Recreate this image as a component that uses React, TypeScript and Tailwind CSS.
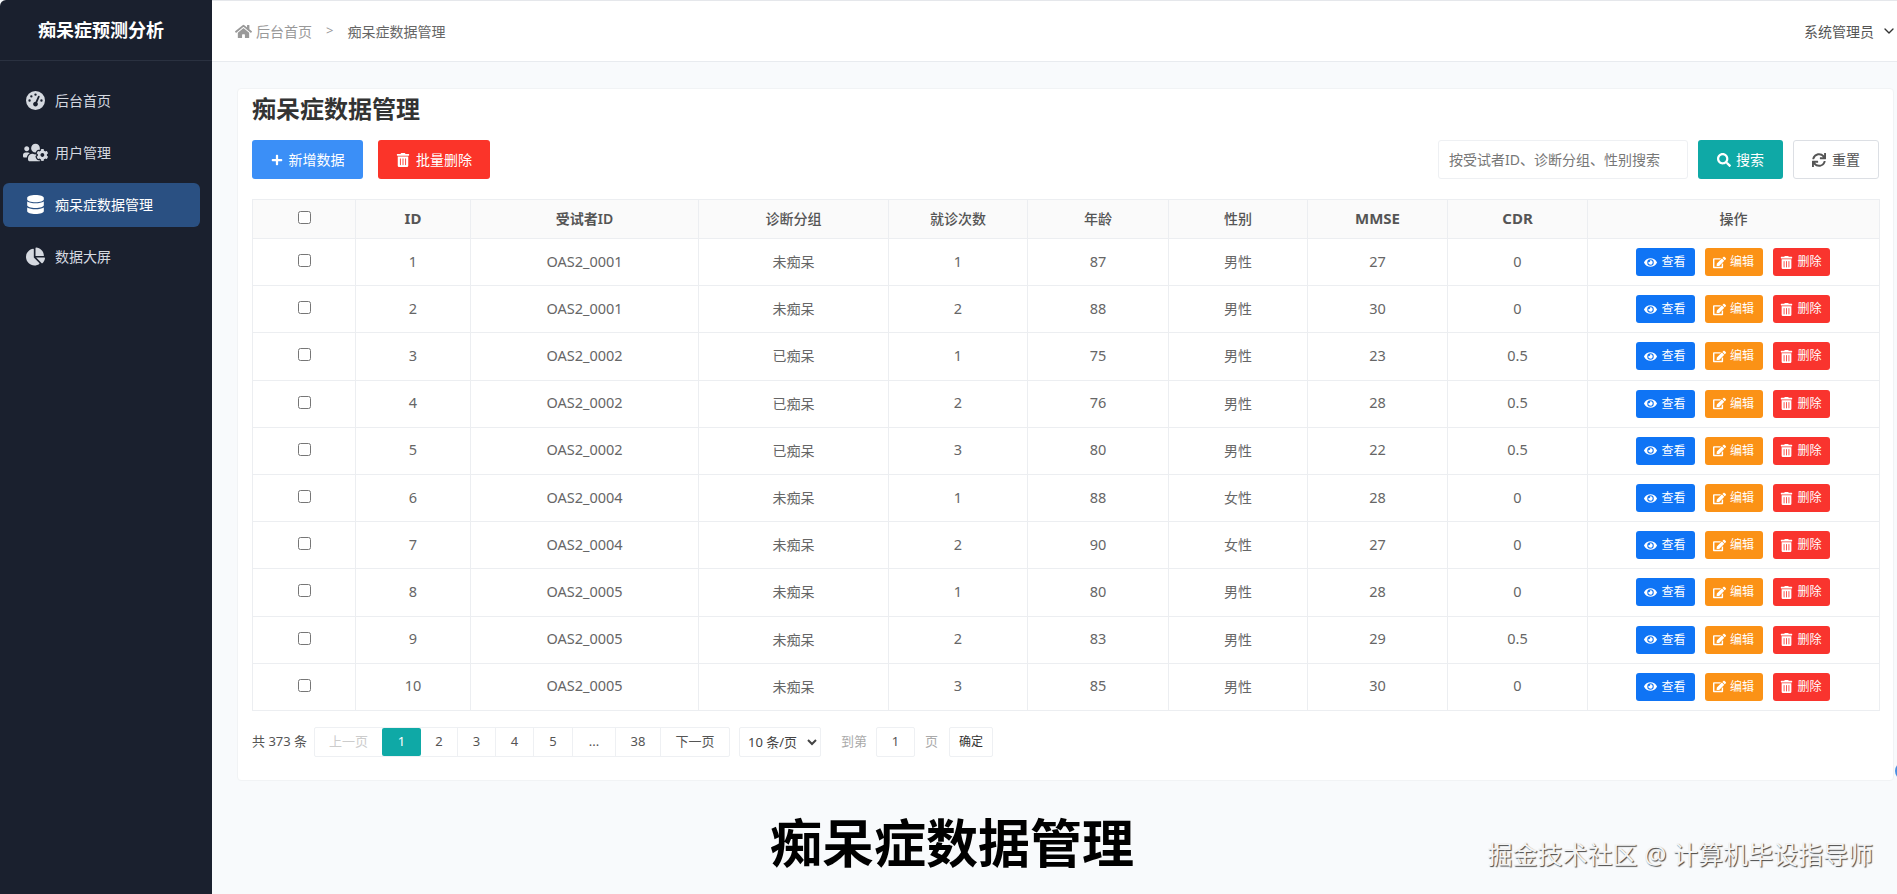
import {
  FaChartPie,
  FaDatabase,
  FaEdit,
  FaEye,
  FaHome,
  FaPlus,
  FaSearch,
  FaSync,
  FaTrashAlt,
  FaUsersCog,
} from "react-icons/fa";
import { FaGaugeHigh } from "react-icons/fa6";
import { FiChevronDown } from "react-icons/fi";

const rows = [
  { id: 1, sid: "OAS2_0001", group: "未痴呆", visit: 1, age: 87, sex: "男性", mmse: 27, cdr: "0" },
  { id: 2, sid: "OAS2_0001", group: "未痴呆", visit: 2, age: 88, sex: "男性", mmse: 30, cdr: "0" },
  { id: 3, sid: "OAS2_0002", group: "已痴呆", visit: 1, age: 75, sex: "男性", mmse: 23, cdr: "0.5" },
  { id: 4, sid: "OAS2_0002", group: "已痴呆", visit: 2, age: 76, sex: "男性", mmse: 28, cdr: "0.5" },
  { id: 5, sid: "OAS2_0002", group: "已痴呆", visit: 3, age: 80, sex: "男性", mmse: 22, cdr: "0.5" },
  { id: 6, sid: "OAS2_0004", group: "未痴呆", visit: 1, age: 88, sex: "女性", mmse: 28, cdr: "0" },
  { id: 7, sid: "OAS2_0004", group: "未痴呆", visit: 2, age: 90, sex: "女性", mmse: 27, cdr: "0" },
  { id: 8, sid: "OAS2_0005", group: "未痴呆", visit: 1, age: 80, sex: "男性", mmse: 28, cdr: "0" },
  { id: 9, sid: "OAS2_0005", group: "未痴呆", visit: 2, age: 83, sex: "男性", mmse: 29, cdr: "0.5" },
  { id: 10, sid: "OAS2_0005", group: "未痴呆", visit: 3, age: 85, sex: "男性", mmse: 30, cdr: "0" },
];

const menu = [
  { label: "后台首页", icon: <FaGaugeHigh /> },
  { label: "用户管理", icon: <FaUsersCog className="shrink-0 text-[25px]" /> },
  { label: "痴呆症数据管理", icon: <FaDatabase />, active: true },
  { label: "数据大屏", icon: <FaChartPie /> },
];

// the latin headers come out a bit larger and heavier than the chinese ones
const headers = [
  { label: "ID", cls: "text-[15px] font-bold" },
  { label: "受试者ID", cls: "font-semibold" },
  { label: "诊断分组", cls: "font-medium" },
  { label: "就诊次数", cls: "font-medium" },
  { label: "年龄", cls: "font-medium" },
  { label: "性别", cls: "font-medium" },
  { label: "MMSE", cls: "text-[15px] font-bold" },
  { label: "CDR", cls: "text-[15px] font-bold" },
  { label: "操作", cls: "font-medium" },
];
const colWidths = [103, 115, 228, 190, 139, 141, 139, 140, 140, 292];

const pages = [
  { label: "2", w: "w-[37px]" },
  { label: "3", w: "w-[38px]" },
  { label: "4", w: "w-[38px]" },
  { label: "5", w: "w-[39px]" },
  { label: "...", w: "w-[43px]" },
  { label: "38", w: "w-[45px]" },
  { label: "下一页", w: "w-[68px]" },
];

const cellLine = "border border-[#eceef1]";
const textCell = "border border-[#eceef1] pb-[1px]";

export default function App() {
  return (
    <div className="relative flex h-screen overflow-hidden bg-[#f8fafc] font-['Noto_Sans','Noto_Sans_CJK_SC',sans-serif] text-[14px] text-[#666]">
      {/* sidebar */}
      <aside className="w-[212px] shrink-0 rounded-tl-md bg-[#1a202e] text-[#d5d9e0]">
        <div className="flex h-[61px] items-center justify-center border-b border-[#2a3140] pr-[10px] text-[18px] font-bold text-white">
          痴呆症预测分析
        </div>
        <nav className="mt-[18px] flex flex-col gap-2 px-[3px]">
          {menu.map((m) => (
            <div
              key={m.label}
              className={`flex h-[44px] w-[197px] items-center gap-[10px] rounded-md pb-[2px] pl-[23px] ${m.active ? "bg-[#2a5082] text-white" : ""}`}
            >
              <span className="flex w-[19px] justify-center text-[19px]">{m.icon}</span>
              {m.label}
            </div>
          ))}
        </nav>
      </aside>

      <div className="flex min-w-0 flex-1 flex-col">
        {/* top bar */}
        <header className="flex h-[62px] shrink-0 items-center justify-between border-t border-b border-t-[#e5e7eb] border-b-[#e8ebef] bg-white pl-[23px] pr-0">
          <div className="flex items-center text-[#999]">
            <FaHome className="mr-[4px] text-[17px]" />
            后台首页
            <span className="mx-[14px] text-[13px]">&gt;</span>
            <span className="text-[#666]">痴呆症数据管理</span>
          </div>
          <div className="flex items-center gap-[7px] text-[#555]">
            系统管理员
            <FiChevronDown className="text-[16px] text-[#333]" />
          </div>
        </header>

        {/* content */}
        <main className="flex flex-1 flex-col pl-[25px] pr-[3px] pt-[26px]">
          <section className="h-[693px] rounded-sm border border-[#f1f3f5] bg-white px-[14px]">
            <h1 className="flex h-[51px] items-center pb-[12px] text-[24px] font-bold text-[#333]">痴呆症数据管理</h1>

            <div className="flex items-center justify-between">
              <div className="flex gap-[15px]">
                <button className="flex h-[39px] w-[111px] items-center justify-center gap-[6px] rounded-[3px] bg-[#3b8ff7] text-white">
                  <FaPlus className="text-[12px]" />
                  新增数据
                </button>
                <button className="flex h-[39px] w-[112px] items-center justify-center gap-[6px] rounded-[3px] bg-[#fb3429] text-white">
                  <FaTrashAlt className="text-[14px]" />
                  批量删除
                </button>
              </div>
              <div className="flex items-center gap-[10px]">
                <input
                  placeholder="按受试者ID、诊断分组、性别搜索"
                  className="h-[39px] w-[250px] rounded-[3px] border border-[#eef0f3] px-[10px] placeholder:text-[#777]"
                />
                <button className="flex h-[39px] w-[85px] items-center justify-center gap-[5px] rounded-[3px] bg-[#0fa9a6] text-white">
                  <FaSearch className="text-[14px]" />
                  搜索
                </button>
                <button className="flex h-[39px] w-[86px] items-center justify-center gap-[6px] rounded-[3px] border border-[#dcdfe4] bg-white text-[#555]">
                  <FaSync className="text-[14px]" />
                  重置
                </button>
              </div>
            </div>

            <table className="mt-[20px] w-[1627px] table-fixed border-collapse text-center">
              <colgroup>
                {colWidths.map((w, i) => (
                  <col key={i} style={{ width: w }} />
                ))}
              </colgroup>
              <thead>
                <tr className="h-[39px] bg-[#fafafa] text-[#555]">
                  <th className={cellLine}>
                    <input type="checkbox" className="mx-auto -mt-[3px] block h-[13px] w-[13px]" />
                  </th>
                  {headers.map((h) => (
                    <th key={h.label} className={`${textCell} ${h.cls}`}>
                      {h.label}
                    </th>
                  ))}
                </tr>
              </thead>
              <tbody className="text-[14.5px]">
                {rows.map((r) => (
                  <tr key={r.id} className="h-[47.2px]">
                    <td className={cellLine}>
                      <input type="checkbox" className="mx-auto -mt-[3px] block h-[13px] w-[13px]" />
                    </td>
                    <td className={textCell}>{r.id}</td>
                    <td className={textCell}>{r.sid}</td>
                    <td className={`${textCell} text-[14px]`}>{r.group}</td>
                    <td className={textCell}>{r.visit}</td>
                    <td className={textCell}>{r.age}</td>
                    <td className={`${textCell} text-[14px]`}>{r.sex}</td>
                    <td className={textCell}>{r.mmse}</td>
                    <td className={textCell}>{r.cdr}</td>
                    <td className={cellLine}>
                      <div className="flex justify-center gap-[10px] pr-[2px] text-[12px] text-white">
                        <button className="flex h-[28px] w-[59px] items-center justify-center gap-[4px] rounded-[3px] bg-[#0f74f5]">
                          <FaEye className="text-[13px]" />
                          查看
                        </button>
                        <button className="flex h-[28px] w-[58px] items-center justify-center gap-[4px] rounded-[3px] bg-[#fb9216]">
                          <FaEdit className="text-[13px]" />
                          编辑
                        </button>
                        <button className="flex h-[28px] w-[57px] items-center justify-center gap-[4px] rounded-[3px] bg-[#f9342e]">
                          <FaTrashAlt className="text-[13px]" />
                          删除
                        </button>
                      </div>
                    </td>
                  </tr>
                ))}
              </tbody>
            </table>

            {/* pagination */}
            <div className="mt-[16px] flex h-[30px] items-center text-[13px] text-[#555]">
              <span className="w-[62px]">共 373 条</span>
              <div className="flex h-full rounded-[2px] border border-[#eef0f3]">
                <span className="flex w-[67px] items-center justify-center text-[#ccc]">上一页</span>
                <span className="flex w-[39px] items-center justify-center rounded-[2px] bg-[#0fa9a6] text-white">1</span>
                {pages.map((p) => (
                  <span key={p.label} className={`flex ${p.w} items-center justify-center border-r border-[#eef0f3] last:border-r-0`}>
                    {p.label}
                  </span>
                ))}
              </div>
              <select className="ml-[9px] h-full w-[82px] rounded-[2px] border border-[#eef0f3] pl-[4px] text-[#444]">
                <option>10 条/页</option>
              </select>
              <span className="ml-[20px] text-[#aaa]">到第</span>
              <span className="ml-[9px] flex h-full w-[39px] items-center justify-center rounded-[2px] border border-[#eef0f3]">1</span>
              <span className="ml-[10px] text-[#aaa]">页</span>
              <button className="ml-[11px] h-full w-[44px] rounded-[2px] border border-[#eef0f3] text-[12px] text-[#333]">确定</button>
            </div>
          </section>
        </main>
      </div>

      {/* video caption, watermark and the chat bubble cut off at the edge */}
      <div className="absolute left-0 right-0 top-[811px] pl-[7px] text-center text-[52px] font-semibold leading-[64px] text-black">
        痴呆症数据管理
      </div>
      <div className="absolute right-[24px] top-[838px] text-[25px] leading-[32px] text-[#f4f4f4] [text-shadow:1px_1px_1px_#444]">
        掘金技术社区 @ 计算机毕设指导师
      </div>
      <div className="absolute left-[1895px] top-[762px] h-[18px] w-[18px] rounded-full bg-[#4a90e2]" />
    </div>
  );
}
